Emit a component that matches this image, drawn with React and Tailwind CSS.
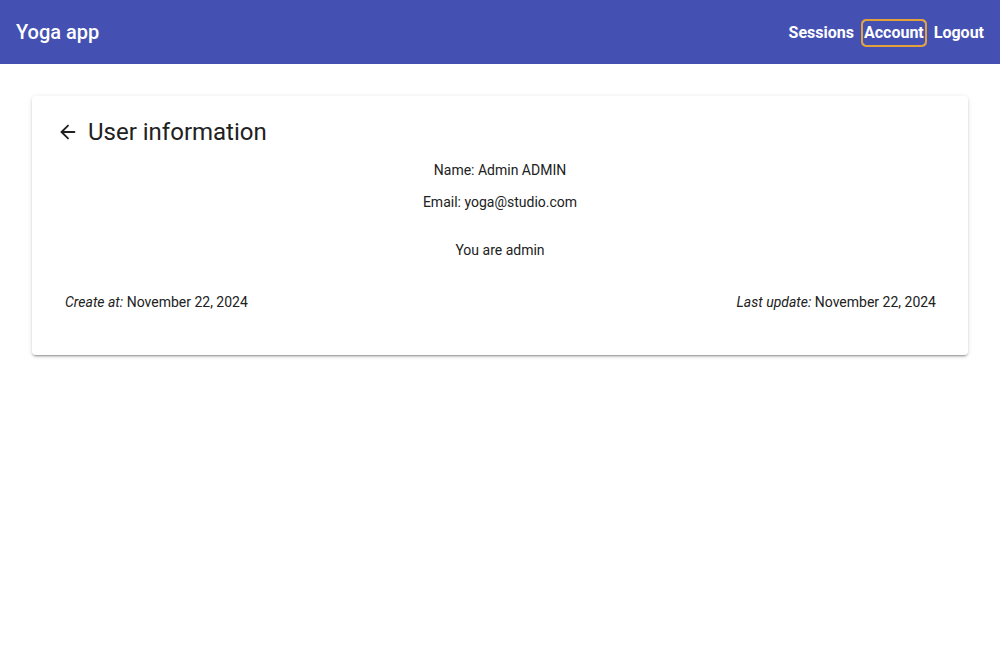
import { ArrowLeft } from "lucide-react";

export default function App() {
  return (
    <div className="min-h-[660px] bg-white font-['Roboto',sans-serif] text-[#212121]">
      <header className="flex h-16 items-center justify-between bg-[#4451b2] px-4 text-white">
        <span className="text-[20px] font-medium">Yoga app</span>
        <nav className="mt-[2px] flex items-center gap-[9px] text-[16px] font-bold">
          <span>Sessions</span>
          <span className="rounded-[3px] px-[1px] outline-2 outline-[#e3a03b] ring-1 ring-white">
            Account
          </span>
          <span>Logout</span>
        </nav>
      </header>

      <main className="p-8">
        <div className="rounded-[4px] bg-white px-4 pt-4 pb-[43px] shadow-[0_3px_1px_-2px_rgba(0,0,0,0.2),0_2px_2px_0_rgba(0,0,0,0.14),0_1px_5px_0_rgba(0,0,0,0.12)]">
          <div className="flex items-center">
            <button className="flex h-10 w-10 items-center justify-center text-[#212121]">
              <ArrowLeft size={22} strokeWidth={2} />
            </button>
            <h1 className="text-[24px] leading-10">User information</h1>
          </div>

          <div className="mt-2 text-center text-[14px] leading-5">
            <p>Name: Admin ADMIN</p>
            <p className="mt-3">Email: yoga@studio.com</p>
            <p className="mt-7">You are admin</p>
          </div>

          <div className="mt-8 flex justify-between pl-[17px] pr-4 text-[14px] leading-5">
            <p>
              <i>Create at:</i> November 22, 2024
            </p>
            <p>
              <i>Last update:</i> November 22, 2024
            </p>
          </div>
        </div>
      </main>
    </div>
  );
}
